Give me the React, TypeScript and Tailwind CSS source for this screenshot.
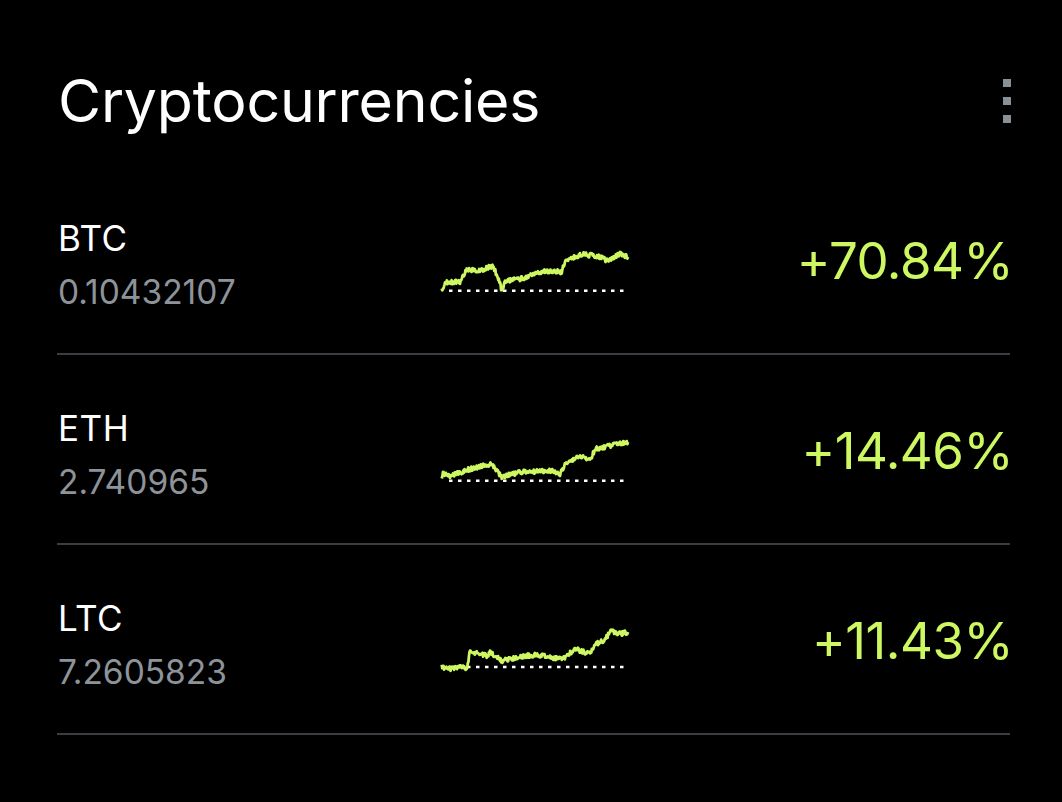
import React from "react";

type Pt = [number, number];

// key points of each sparkline, in page coords minus the svg origin
const coins: { sym: string; amount: string; change: string; base: number; keys: Pt[] }[] = [
  {
    sym: "BTC",
    amount: "0.10432107",
    change: "+70.84%",
    base: 240,
    keys: [
      [441.7, 291.7], [445, 283], [460, 283], [466.7, 270], [478, 272], [493, 267], [500, 283],
      [501.7, 291.7], [505, 282], [520, 280], [545, 272], [561.7, 273], [565, 262], [583, 255],
      [600, 258], [608, 262], [620, 255], [628, 258],
    ],
  },
  {
    sym: "ETH",
    amount: "2.740965",
    change: "+14.46%",
    base: 430,
    keys: [
      [441.7, 481.7], [443, 475], [450, 477], [470, 470], [491.7, 465], [501.7, 478], [520, 473],
      [553, 472], [560, 475], [566.7, 463], [583, 457], [590, 462], [595, 450], [610, 447], [628, 443],
    ],
  },
  {
    sym: "LTC",
    amount: "7.2605823",
    change: "+11.43%",
    base: 620,
    keys: [
      [441.7, 668], [450, 670], [463, 667], [466.7, 670], [470, 652], [486.7, 657], [490, 653],
      [501.7, 662], [523, 657], [536.7, 656], [563, 660], [575, 650], [590, 655], [595, 645],
      [603, 642], [611.7, 632], [620, 635], [628, 633],
    ],
  },
];

function rng(seed: number) {
  let s = seed;
  return () => {
    s = (s * 16807) % 2147483647;
    return s / 2147483647;
  };
}

function buildPath(keys: Pt[], base: number, seed: number) {
  const r = rng(seed);
  const pts: string[] = [];
  for (let i = 0; i < keys.length - 1; i++) {
    const [x1, y1] = keys[i];
    const [x2, y2] = keys[i + 1];
    const steps = Math.max(1, Math.round((x2 - x1) / 0.6));
    for (let k = 0; k < steps; k++) {
      const t = k / steps;
      const x = x1 + (x2 - x1) * t - 438;
      const y = y1 + (y2 - y1) * t - base + (r() - 0.5) * 4.5;
      pts.push(`${x.toFixed(1)},${y.toFixed(1)}`);
    }
  }
  const last = keys[keys.length - 1];
  pts.push(`${(last[0] - 438).toFixed(1)},${(last[1] - base).toFixed(1)}`);
  return "M" + pts.join(" L");
}

function Sparkline({ keys, base, seed }: { keys: Pt[]; base: number; seed: number }) {
  const baseline = keys[0][1] - base;
  return (
    <svg width="192" height="60" viewBox="0 0 192 60" className="shrink-0 mt-[20px]">
      <line x1="11" x2="190" y1={baseline} y2={baseline} stroke="#ffffff" strokeWidth="2.4" strokeDasharray="3.5 5.5" />
      <path d={buildPath(keys, base, seed)} fill="none" stroke="#cdf862" strokeWidth="2.8" strokeLinejoin="round" />
    </svg>
  );
}

export default function App() {
  return (
    <div className="w-[1062px] h-[802px] bg-black text-white font-['Inter','Liberation_Sans',sans-serif] pl-[57px] pr-[52px]">
      <div className="h-[165px] flex items-start justify-between pt-[71px]">
        <h1 className="text-[59px] leading-none tracking-[-0.2px] ml-[1px]">Cryptocurrencies</h1>
        <div className="flex flex-col gap-[10px] mt-[8px] mr-[-1px]">
          <span className="w-[8px] h-[8px] bg-[#8a9196]" />
          <span className="w-[8px] h-[8px] bg-[#8a9196]" />
          <span className="w-[8px] h-[8px] bg-[#8a9196]" />
        </div>
      </div>
      {coins.map((c, i) => (
        <div key={c.sym} className="h-[190px] flex items-center border-b-[2px] border-[#3a3e42]">
          <div className="w-[381px] shrink-0 flex flex-col mt-[12px] pl-[1px]">
            <span className="text-[35px] leading-[40px] tracking-[0.5px]">{c.sym}</span>
            <span className="text-[33.5px] leading-[40px] mt-[14px] text-[#8d9399]">{c.amount}</span>
          </div>
          <Sparkline keys={c.keys} base={c.base} seed={i * 977 + 13} />
          <div className="ml-auto mr-[-3px] text-[51px] leading-none text-[#cdf862] tracking-[-0.5px] mt-[3px]">{c.change}</div>
        </div>
      ))}
    </div>
  );
}
